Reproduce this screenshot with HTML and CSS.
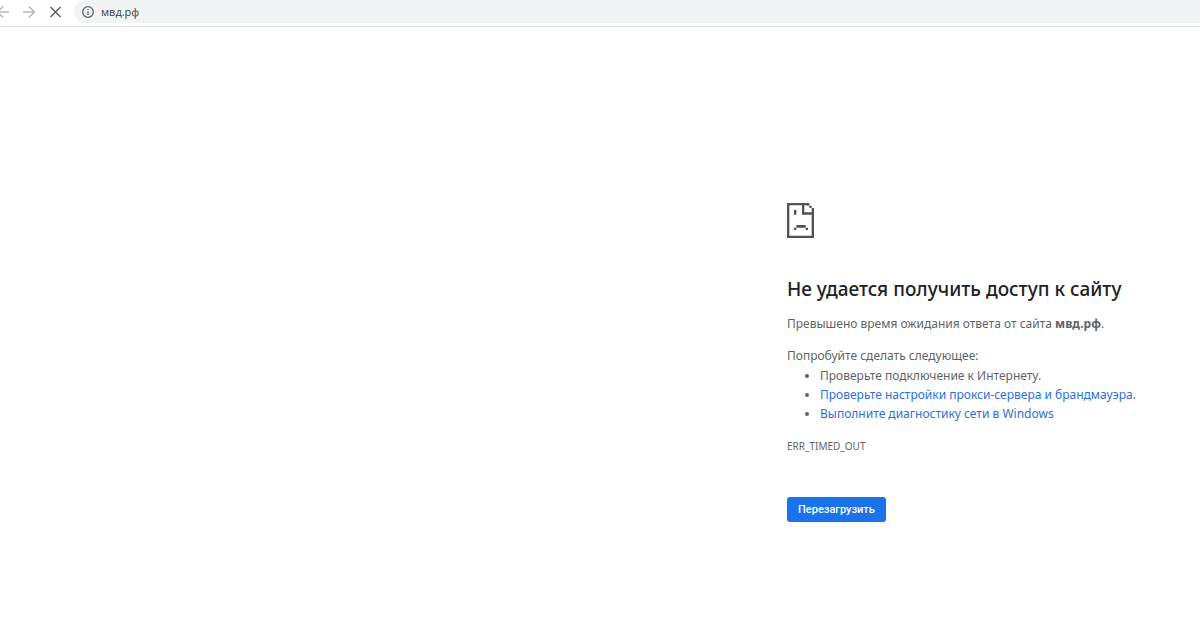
FILE: index.html
```html
<!DOCTYPE html>
<html lang="ru">
<head>
<meta charset="utf-8">
<title>мвд.рф</title>
<link rel="stylesheet" href="styles.css">
</head>
<body>
<header class="toolbar">
  <nav class="nav">
    <button class="nav-button nav-button-dim" type="button" aria-label="Назад">
      <svg viewBox="0 0 14 14"><path d="M12 7H1M6 1.5.5 7 6 12.5"/></svg>
    </button>
    <button class="nav-button nav-button-dim" type="button" aria-label="Вперёд">
      <svg viewBox="0 0 14 14"><path d="M0 7h11M6 1.5 11.5 7 6 12.5"/></svg>
    </button>
    <button class="nav-button" type="button" aria-label="Остановить">
      <svg viewBox="0 0 14 14"><path d="m1.5 2 10 10M11.5 2l-10 10"/></svg>
    </button>
  </nav>
  <div class="omnibox">
    <svg class="info" viewBox="0 0 12 12"><circle cx="6" cy="6" r="5.3"/><path d="M6 5.3V9M6 3v1.2"/></svg>
    <input class="address" type="text" value="мвд.рф" aria-label="Адресная строка">
  </div>
</header>
<main class="page">
  <section class="error">
    <svg class="sad-page" viewBox="0 0 81 105" aria-hidden="true">
      <path fill-rule="evenodd" d="M0 0H67V8H74V15H81V105H0ZM7 7V98H74V35H45V7ZM52 7V28H74V15H67V8H60V7Z"/>
      <path d="M21 21h7v14h-7zM28 66h28v8H28zM21 74h7v7h-7zM56 74h7v7h-7z"/>
    </svg>
    <h1 class="title">Не удается получить доступ к сайту</h1>
    <p class="summary">Превышено время ожидания ответа от сайта <strong>мвд.рф</strong>.</p>
    <p class="hint">Попробуйте сделать следующее:</p>
    <ul class="suggestions">
      <li>Проверьте подключение к Интернету.</li>
      <li><a href="#proxy">Проверьте настройки прокси-сервера и брандмауэра</a>.</li>
      <li><a href="#diagnostics">Выполните диагностику сети в Windows</a></li>
    </ul>
    <p class="code">ERR_TIMED_OUT</p>
    <button class="reload" type="button">Перезагрузить</button>
  </section>
</main>
</body>
</html>
```
FILE: styles.css
```css
* { box-sizing: border-box; }
body {
  margin: 0;
  background: #fff;
  color: #5f6368;
  font: 12px/20px "Noto Sans", "Open Sans", sans-serif;
}
.toolbar {
  display: flex;
  gap: 11px;
  height: 27px;
  padding-bottom: 3px;
  border-bottom: 1px solid #dfe0e2;
}
.nav { display: flex; align-items: center; gap: 12px; margin-left: -3px; }
.nav-button {
  display: flex;
  width: 14px;
  padding: 0;
  border: 0;
  background: none;
  color: #55585c;
}
.nav-button-dim { color: #b5b7b9; }
.nav-button svg { width: 14px; height: 14px; fill: none; stroke: currentColor; stroke-width: 1.4; }
.omnibox {
  display: flex;
  flex: 1;
  align-items: center;
  gap: 7px;
  padding-left: 8px;
  border-radius: 12px 0 0 12px;
  background: #f1f3f4;
}
.info { width: 12px; height: 12px; fill: none; stroke: #5f6368; stroke-width: 1.3; }
.address {
  flex: 1;
  min-width: 0;
  padding: 0;
  border: 0;
  background: none;
  color: #3c4043;
  font: 11px/20px "Open Sans", "Noto Sans", sans-serif;
}
.page { display: flex; justify-content: flex-end; padding: 176px 48px 40px 16px; }
.error { width: 365px; }
.sad-page { display: block; width: 27px; height: 35px; fill: #535353; }
.title {
  margin: 38px 0 0;
  color: #202124;
  font-size: 19px;
  font-weight: 500;
  line-height: 26px;
  white-space: nowrap;
}
.summary { margin: 12px 0; }
.hint { margin: 0; }
.suggestions { margin: 0; padding: 0 0 1px 33px; line-height: 19px; }
a { color: #2b6fdb; text-decoration: none; }
.code { margin: 12px 0 41px; font-size: 10px; }
.reload {
  height: 25px;
  padding: 0 11px;
  border: 0;
  border-radius: 3px;
  background: #1a73e8;
  color: #fff;
  font: 500 11px/25px Roboto, sans-serif;
}
```
